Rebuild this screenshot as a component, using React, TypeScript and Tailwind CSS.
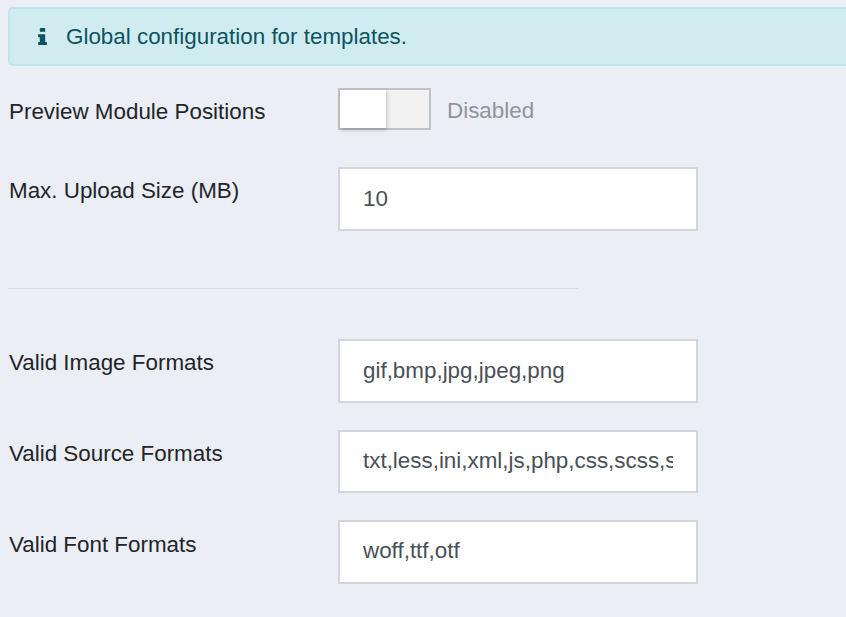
const font = "font-['Liberation_Sans',Arial,sans-serif]";

function Row({
  label,
  value,
  className,
  labelClass,
  inputClass,
}: {
  label: string;
  value: string;
  className: string;
  labelClass: string;
  inputClass: string;
}) {
  return (
    <div className={`flex items-start ${className}`}>
      <label className={`w-[330px] shrink-0 pl-[1px] text-[22.4px] leading-[28px] text-[#212529] ${labelClass}`}>{label}</label>
      <input
        readOnly
        value={value}
        className={`w-[360px] border-2 border-[#d2d6dc] bg-white px-[23px] text-[22.4px] text-[#495057] outline-none ${inputClass}`}
      />
    </div>
  );
}

export default function App() {
  return (
    <div className={`h-[617px] w-[846px] overflow-hidden bg-[#ebeef5] pl-[8px] pt-[7px] ${font}`}>
      <div className="flex h-[59px] w-[846px] items-center rounded-l-[5px] border-2 border-r-0 border-[#bee5eb] bg-[#d1ecf1] pl-[28px] text-[22.4px] text-[#0c5460]">
        <svg viewBox="0 0 640 1408" className="h-[17px] w-[9px]" fill="#0c5460" preserveAspectRatio="none">
          <path d="M640 1152v128q0 26-19 45t-45 19H64q-26 0-45-19t-19-45v-128q0-26 19-45t45-19h64V704H64q-26 0-45-19T0 640V512q0-26 19-45t45-19h384q26 0 45 19t19 45v576h64q26 0 45 19t19 45zM512 0v192q0 26-19 45t-45 19H192q-26 0-45-19t-19-45V0q0-26 19-45t45-19h256q26 0 45 19t19 45z" transform="translate(0 64)" />
        </svg>
        <span className="ml-[19px]">Global configuration for templates.</span>
      </div>

      <div className="mt-[22px] flex items-start">
        <label className="w-[330px] shrink-0 pl-[1px] pt-[10px] text-[22.4px] leading-[28px] text-[#212529]">Preview Module Positions</label>
        <div className="flex h-[42px] w-[93px] border-2 border-[#c0c2c4] bg-[#f1f1f1]">
          <div className="h-full w-[46px] bg-white shadow-[1px_2px_4px_rgba(0,0,0,0.22)]" />
        </div>
        <span className="ml-[16px] pt-[9px] text-[22.4px] leading-[28px] text-[#8f959b]">Disabled</span>
      </div>

      <Row label="Max. Upload Size (MB)" value="10" className="mt-[37px]" labelClass="pt-[10px]" inputClass="h-[64px]" />

      <hr className="mt-[57px] w-[570px] border-0 border-t border-[#d8dade]" />

      <Row label="Valid Image Formats" value="gif,bmp,jpg,jpeg,png" className="mt-[50px]" labelClass="pt-[10px]" inputClass="h-[64px]" />
      <Row label="Valid Source Formats" value="txt,less,ini,xml,js,php,css,scss,sass,json" className="mt-[27px]" labelClass="pt-[10px]" inputClass="h-[63px] pb-[2px]" />
      <Row label="Valid Font Formats" value="woff,ttf,otf" className="mt-[27px]" labelClass="pt-[11px]" inputClass="h-[64px] pb-[2px]" />
    </div>
  );
}
